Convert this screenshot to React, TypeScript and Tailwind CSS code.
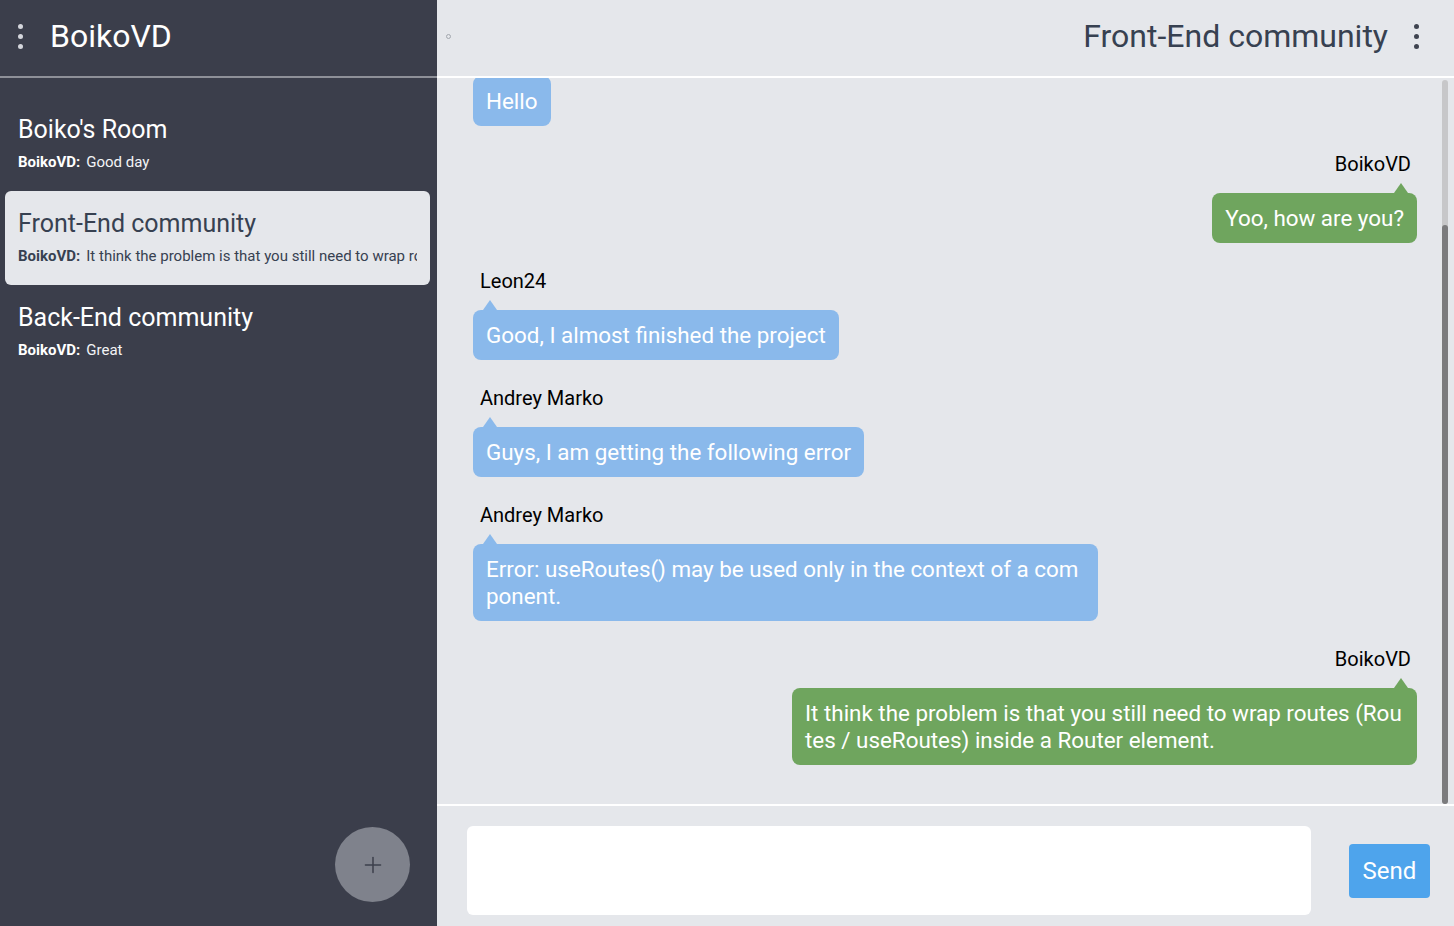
import React, { useLayoutEffect, useRef } from 'react';
import { Plus } from 'lucide-react';

interface Room {
  id: string;
  title: string;
  author: string;
  last: string;
}

interface Msg {
  id: number;
  author: string;
  text: string;
  own: boolean;
}

const rooms: Room[] = [
  { id: 'boiko', title: "Boiko's Room", author: 'BoikoVD', last: 'Good day' },
  {
    id: 'front',
    title: 'Front-End community',
    author: 'BoikoVD',
    last: 'It think the problem is that you still need to wrap routes (Routes / useRoutes) inside a Router element.',
  },
  { id: 'back', title: 'Back-End community', author: 'BoikoVD', last: 'Great' },
];

const messages: Msg[] = [
  { id: 1, author: 'BoikoVD', text: 'Hi everyone!', own: true },
  { id: 2, author: 'Leon24', text: 'Hello', own: false },
  { id: 3, author: 'BoikoVD', text: 'Yoo, how are you?', own: true },
  { id: 4, author: 'Leon24', text: 'Good, I almost finished the project', own: false },
  { id: 5, author: 'Andrey Marko', text: 'Guys, I am getting the following error', own: false },
  {
    id: 6,
    author: 'Andrey Marko',
    text: 'Error: useRoutes() may be used only in the context of a component.',
    own: false,
  },
  {
    id: 7,
    author: 'BoikoVD',
    text: 'It think the problem is that you still need to wrap routes (Routes / useRoutes) inside a Router element.',
    own: true,
  },
];

const Dots = ({ light }: { light?: boolean }) => (
  <div className="flex flex-col gap-[5px]">
    <span className={`w-[5px] h-[5px] rounded-full ${light ? 'bg-[#d4d6dc]' : 'bg-[#3f4450]'}`} />
    <span className={`w-[5px] h-[5px] rounded-full ${light ? 'bg-[#d4d6dc]' : 'bg-[#3f4450]'}`} />
    <span className={`w-[5px] h-[5px] rounded-full ${light ? 'bg-[#d4d6dc]' : 'bg-[#3f4450]'}`} />
  </div>
);

const MessageItem = ({ msg }: { msg: Msg }) => {
  const bubbleColor = msg.own ? 'bg-[#6fa55e]' : 'bg-[#8ab9eb]';
  const tailColor = msg.own ? 'border-b-[#6fa55e]' : 'border-b-[#8ab9eb]';
  return (
    <div className={`flex flex-col ${msg.own ? 'items-end' : 'items-start'}`}>
      <div className={`text-[20px] leading-[24px] text-black ${msg.own ? 'px-[6px]' : 'px-[7px]'}`}>
        {msg.author}
      </div>
      <div
        className={`relative mt-[17px] max-w-[625px] rounded-lg px-[13px] py-[11.5px] text-[22.4px] leading-[27px] text-white break-all ${bubbleColor}`}
      >
        {/* tail */}
        <span
          className={`absolute -top-[10px] w-0 h-0 border-x-[7px] border-x-transparent border-b-[10px] ${tailColor} ${
            msg.own ? 'right-[9px]' : 'left-[10px]'
          }`}
        />
        {msg.text}
      </div>
    </div>
  );
};

export default function App() {
  const listRef = useRef<HTMLDivElement>(null);
  const activeRoom = 'front';

  useLayoutEffect(() => {
    // keep the chat scrolled to the latest message
    if (listRef.current) {
      listRef.current.scrollTop = listRef.current.scrollHeight;
    }
  }, []);

  return (
    <div className="flex h-screen w-full overflow-hidden font-['Roboto','Liberation_Sans',sans-serif]">
      {/* Sidebar */}
      <aside className="w-[437px] shrink-0 bg-[#3b3e4b] flex flex-col">
        <div className="h-[78px] shrink-0 border-b-2 border-[#8e9098] flex items-center gap-[27px] pl-[18px] pb-1">
          <Dots light />
          <span className="text-[32px] text-white">BoikoVD</span>
        </div>

        <div className="flex-1 pt-[19px]">
          {rooms.map((room) => {
            const isActive = room.id === activeRoom;
            return (
              <div
                key={room.id}
                className={`ml-[5px] w-[425px] rounded-md pt-[19px] pb-[19px] px-[13px] ${
                  isActive ? 'bg-[#e5e7eb] text-[#374151]' : 'text-white'
                }`}
              >
                <div className="text-[25px] leading-[28px]">{room.title}</div>
                <div className="mt-[8px] text-[15px] leading-[20px] whitespace-nowrap overflow-hidden">
                  <span className="font-bold">{room.author}:</span>
                  <span className={`ml-[6px] ${isActive ? '' : 'text-gray-100'}`}>{room.last}</span>
                </div>
              </div>
            );
          })}
        </div>

        <div className="flex justify-end pr-[27px] pb-[24px]">
          <button className="w-[75px] h-[75px] rounded-full bg-[#7f828c] flex items-center justify-center">
            <Plus size={26} strokeWidth={1.4} className="text-[#3d404c]" />
          </button>
        </div>
      </aside>

      {/* Chat */}
      <main className="flex-1 min-w-0 flex flex-col bg-[#e5e7eb]">
        <div className="h-[78px] shrink-0 border-b-2 border-white flex items-center pl-[9px] pr-[35px] pb-1">
          <span className="w-[5px] h-[5px] rounded-full border border-[#a3a7ae]" />
          <div className="flex-1" />
          <span className="text-[32px] text-[#374151]">Front-End community</span>
          <div className="ml-[26px]">
            <Dots />
          </div>
        </div>

        <div className="flex-1 min-h-0 flex">
          <div ref={listRef} className="flex-1 min-w-0 overflow-hidden pl-[36px] pr-[25px]">
            <div className="flex flex-col gap-[26px] pt-[26px] pb-[39px]">
              {messages.map((m) => (
                <MessageItem key={m.id} msg={m} />
              ))}
            </div>
          </div>
          {/* scrollbar */}
          <div className="w-[6px] mr-[6px] mt-[2px] flex flex-col rounded-full bg-[#c7c7c9]">
            <div className="h-[145px] shrink-0" />
            <div className="flex-1 rounded-full bg-[#7b7b7d]" />
          </div>
        </div>

        <div className="h-[122px] shrink-0 border-t-2 border-white flex items-center gap-[38px] pl-[30px] pr-[24px] pt-[20px] pb-[11px]">
          <textarea className="flex-1 h-[89px] rounded-md bg-white resize-none outline-none p-3 text-[18px]" />
          <button className="w-[81px] h-[54px] rounded bg-[#4ea4ec] text-white text-[24px]">Send</button>
        </div>
      </main>
    </div>
  );
}
